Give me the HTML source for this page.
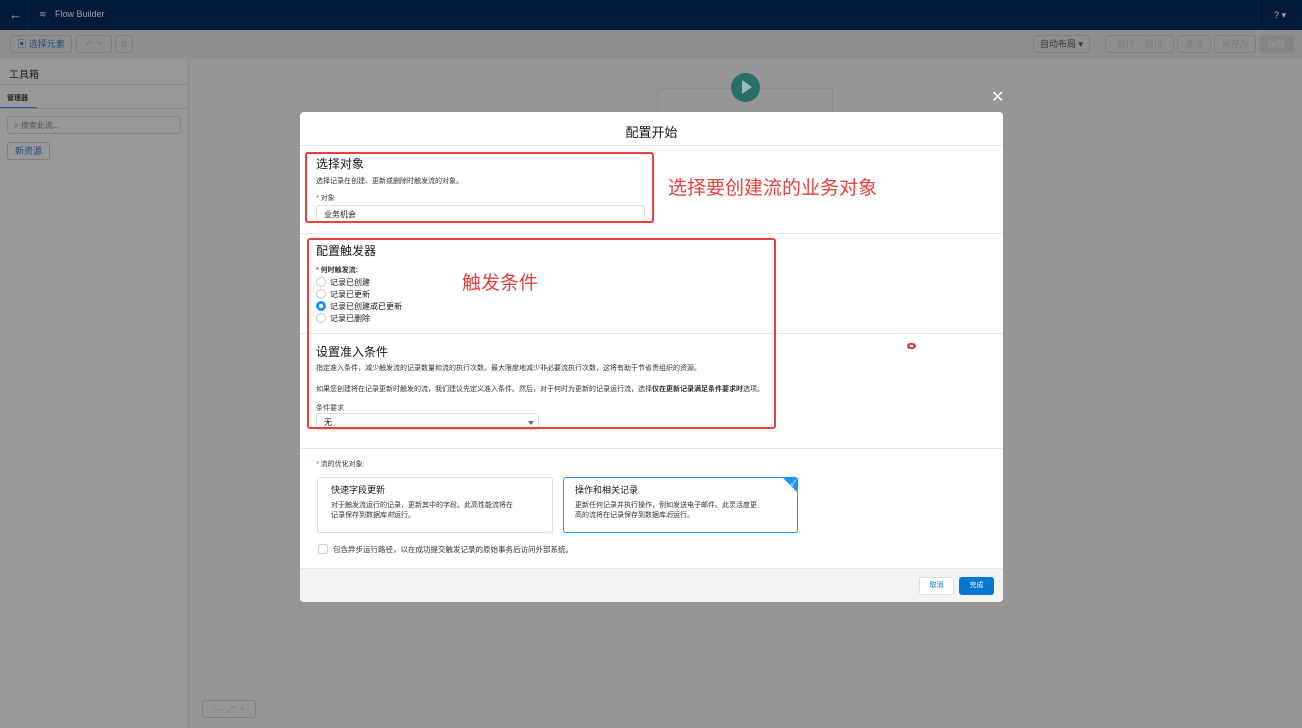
<!DOCTYPE html>
<html><head><meta charset="utf-8"><style>
*{box-sizing:border-box;margin:0;padding:0}
body{width:1302px;height:728px;overflow:hidden;position:relative;background:#969696;font-family:"Liberation Sans","Noto Sans CJK SC",sans-serif;color:#181818}
.abs{position:absolute}
.btn{position:absolute;border:1px solid #7f7f7f;border-radius:3px;font-size:9px;color:#7a7a7a;text-align:center;line-height:16px;height:18px}
.t{position:absolute;white-space:nowrap}
.radio{position:absolute;width:10px;height:10px;border:1px solid #c9c9c9;border-radius:50%;background:#fff}
</style></head><body>
<div class="abs" style="left:0;top:0;width:1302px;height:30px;background:#031a38"></div>
<div class="t" style="left:9px;top:7px;color:#aab;font-size:13px">←</div>
<div class="abs" style="left:28px;top:0;width:1px;height:30px;background:#0c2444"></div>
<div class="t" style="left:39px;top:9px;color:#8a93a3;font-size:9px">≋</div>
<div class="t" style="left:55px;top:9px;color:#9aa2b0;font-size:9px">Flow Builder</div>
<div class="abs" style="left:1258px;top:0;width:1px;height:30px;background:#0c2444"></div>
<div class="t" style="left:1274px;top:10px;color:#aab;font-size:9px">? ▾</div>
<div class="abs" style="left:0;top:30px;width:1302px;height:29px;background:#8f8f8f"></div>
<div class="btn" style="left:10px;top:35px;width:62px;color:#1e4f85">▣ 选择元素</div>
<div class="btn" style="left:76px;top:35px;width:36px">↶ ↷</div>
<div class="btn" style="left:115px;top:35px;width:18px">⚙</div>
<div class="btn" style="left:1033px;top:35px;width:57px;color:#333">自动布局 ▾</div>
<div class="btn" style="left:1105px;top:35px;width:69px">运行 &nbsp;&nbsp; 调试</div>
<div class="btn" style="left:1177px;top:35px;width:34px">激活</div>
<div class="btn" style="left:1214px;top:35px;width:42px">另存为</div>
<div class="btn" style="left:1259px;top:35px;width:35px;background:#858585;color:#999;border-color:#858585">保存</div>
<div class="abs" style="left:0;top:59px;width:189px;height:669px;background:#989898;border-right:1px solid #888"></div>
<div class="t" style="left:9px;top:66px;font-size:10px;color:#222">工具箱</div>
<div class="abs" style="left:0;top:84px;width:189px;height:1px;background:#888"></div>
<div class="t" style="left:7px;top:93px;font-size:7px;font-weight:bold;color:#222">管理器</div>
<div class="abs" style="left:0;top:107px;width:37px;height:2px;background:#1b5a9b"></div>
<div class="abs" style="left:0;top:108px;width:189px;height:1px;background:#888"></div>
<div class="abs" style="left:7px;top:116px;width:174px;height:18px;border:1px solid #858585;border-radius:3px"></div>
<div class="t" style="left:14px;top:120px;font-size:8px;color:#555">⌕ 搜索此流...</div>
<div class="btn" style="left:7px;top:142px;width:43px;color:#1e4f85;height:18px">新资源</div>
<div class="abs" style="left:657px;top:88px;width:176px;height:30px;border:1px solid #8c8c8c;border-radius:3px"></div>
<div class="abs" style="left:731px;top:73px;width:29px;height:29px;border-radius:50%;background:#2b6e67"></div>
<div class="abs" style="left:742px;top:80px;width:0;height:0;border-left:10px solid #9bb;border-top:7px solid transparent;border-bottom:7px solid transparent"></div>
<div class="t" style="left:991px;top:87px;color:#fff;font-size:16px">✕</div>
<div class="btn" style="left:202px;top:700px;width:54px;height:18px">— &nbsp;⤢&nbsp; +</div>

<div class="abs" style="left:300px;top:112px;width:703px;height:490px;background:#fff;border-radius:4px;overflow:hidden">
 <div class="t" style="left:0;width:703px;text-align:center;top:10px;font-size:13px">配置开始</div>
 <div class="abs" style="left:0;top:33px;width:703px;height:1px;background:#e5e5e5"></div>
 <div class="abs" style="left:0;top:121px;width:703px;height:1px;background:#e5e5e5"></div>
 <div class="abs" style="left:0;top:221px;width:703px;height:1px;background:#e5e5e5"></div>
 <div class="abs" style="left:0;top:336px;width:703px;height:1px;background:#e5e5e5"></div>
 <div class="t" style="left:16px;top:43px;font-size:12px">选择对象</div>
 <div class="t" style="left:16px;top:64px;font-size:7px;color:#333">选择记录在创建、更新或删除时触发流的对象。</div>
 <div class="t" style="left:16px;top:81px;font-size:7px;color:#444"><span style="color:#c23934">*</span> 对象</div>
 <div class="abs" style="left:16px;top:93px;width:329px;height:17px;border:1px solid #ddd;border-radius:3px"></div>
 <div class="t" style="left:24px;top:97px;font-size:8px">业务机会</div>
 <div class="abs" style="left:5px;top:40px;width:349px;height:71px;border:2px solid #e8413d;border-radius:3px"></div>
 <div class="t" style="left:368px;top:61px;font-size:19px;color:#e8413d">选择要创建流的业务对象</div>
 <div class="t" style="left:16px;top:130px;font-size:12px">配置触发器</div>
 <div class="t" style="left:16px;top:153px;font-size:7px;font-weight:bold;color:#333"><span style="color:#c23934">*</span> 何时触发流:</div>
 <div class="radio" style="left:16px;top:165px"></div><div class="t" style="left:30px;top:165px;font-size:8px">记录已创建</div>
 <div class="radio" style="left:16px;top:177px"></div><div class="t" style="left:30px;top:177px;font-size:8px">记录已更新</div>
 <div class="radio" style="left:16px;top:189px;border:3px solid #1b96ff"></div><div class="t" style="left:30px;top:189px;font-size:8px">记录已创建或已更新</div>
 <div class="radio" style="left:16px;top:201px"></div><div class="t" style="left:30px;top:201px;font-size:8px">记录已删除</div>
 <div class="t" style="left:162px;top:156px;font-size:19px;color:#e8413d">触发条件</div>
 <div class="t" style="left:16px;top:231px;font-size:12px">设置准入条件</div>
 <div class="t" style="left:16px;top:251px;font-size:7px;color:#333">指定准入条件，减少触发流的记录数量和流的执行次数。最大限度地减少非必要流执行次数，这将有助于节省贵组织的资源。</div>
 <div class="t" style="left:16px;top:272px;font-size:7px;color:#333">如果您创建将在记录更新时触发的流，我们建议先定义准入条件。然后，对于何时为更新的记录运行流，选择<b>仅在更新记录满足条件要求时</b>选项。</div>
 <div class="t" style="left:16px;top:291px;font-size:7px;color:#444">条件要求</div>
 <div class="abs" style="left:16px;top:301px;width:223px;height:17px;border:1px solid #ddd;border-radius:3px"></div>
 <div class="t" style="left:24px;top:305px;font-size:8px">无</div>
 <div class="abs" style="left:228px;top:309px;border-left:3px solid transparent;border-right:3px solid transparent;border-top:4px solid #666"></div>
 <div class="abs" style="left:7px;top:126px;width:469px;height:191px;border:2px solid #e8413d;border-radius:3px"></div>
 <div class="abs" style="left:607px;top:231px;width:9px;height:6px;border-radius:3px;background:#e8413d"></div>
 <div class="abs" style="left:610px;top:233px;width:3px;height:2px;background:#fff"></div>
 <div class="t" style="left:16px;top:347px;font-size:7px;color:#333"><span style="color:#c23934">*</span> 流的优化对象:</div>
 <div class="abs" style="left:17px;top:365px;width:236px;height:56px;border:1px solid #ddd;border-radius:3px"></div>
 <div class="t" style="left:31px;top:371px;font-size:9px">快速字段更新</div>
 <div class="t" style="left:31px;top:389px;font-size:7px;line-height:10px;color:#333">对于触发流运行的记录，更新其中的字段。此高性能流将在<br>记录保存到数据库<i>前</i>运行。</div>
 <div class="abs" style="left:263px;top:365px;width:235px;height:56px;border:1px solid #1b96ff;border-radius:3px;overflow:hidden"><div class="abs" style="right:-1px;top:-1px;border-left:16px solid transparent;border-top:16px solid #1b96ff"></div><div class="t" style="right:1px;top:0;color:#fff;font-size:8px">✓</div></div>
 <div class="t" style="left:275px;top:371px;font-size:9px">操作和相关记录</div>
 <div class="t" style="left:275px;top:389px;font-size:7px;line-height:10px;color:#333">更新任何记录并执行操作，例如发送电子邮件。此灵活度更<br>高的流将在记录保存到数据库<i>后</i>运行。</div>
 <div class="abs" style="left:18px;top:432px;width:10px;height:10px;border:1px solid #ccc;border-radius:2px"></div>
 <div class="t" style="left:33px;top:432px;font-size:7.5px;color:#333">包含异步运行路径，以在成功提交触发记录的原始事务后访问外部系统。</div>
 <div class="abs" style="left:0;top:456px;width:703px;height:34px;background:#f3f3f3;border-top:1px solid #e5e5e5"></div>
 <div class="abs" style="left:619px;top:465px;width:35px;height:18px;border:1px solid #ddd;border-radius:3px;background:#fff;color:#0176d3;font-size:7px;text-align:center;line-height:16px">取消</div>
 <div class="abs" style="left:659px;top:465px;width:35px;height:18px;border-radius:3px;background:#0176d3;color:#fff;font-size:7px;text-align:center;line-height:18px">完成</div>
</div>
</body></html>
